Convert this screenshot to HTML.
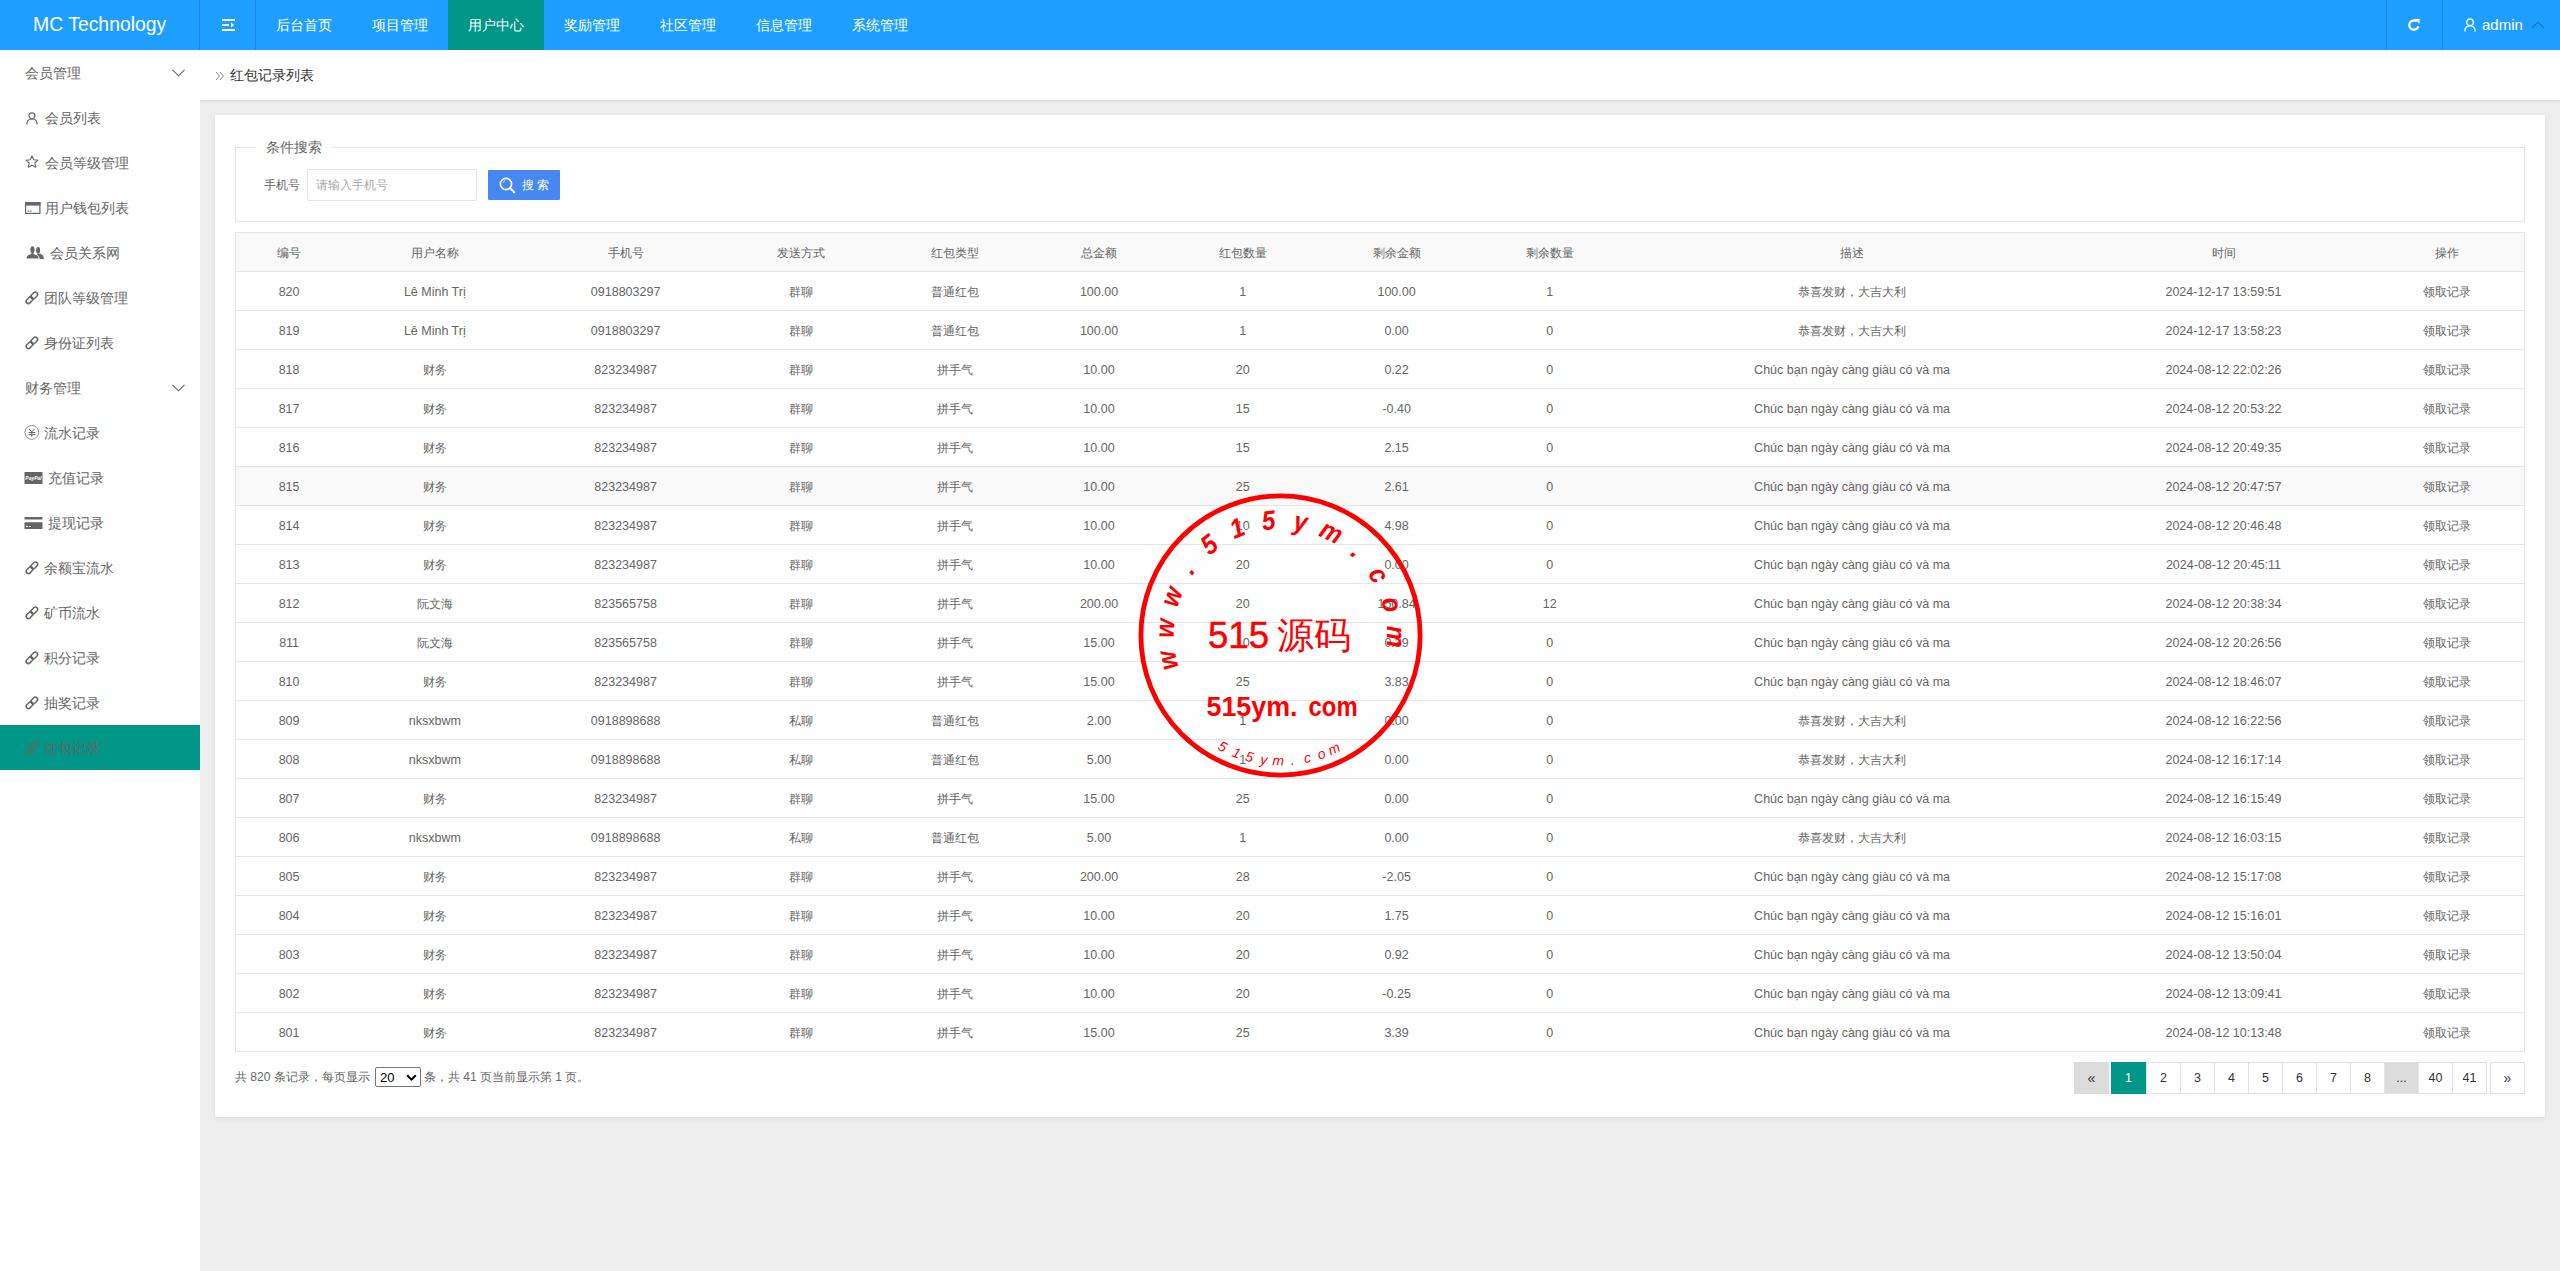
<!DOCTYPE html>
<html><head><meta charset="utf-8"><title>红包记录</title>
<style>
*{margin:0;padding:0;box-sizing:border-box}
html,body{width:2560px;height:1271px;overflow:hidden;background:#eeeeee;font-family:"Liberation Sans",sans-serif;color:#666}
.abs{position:absolute}
#hdr{position:absolute;left:0;top:0;width:2560px;height:50px;background:#1e9fff}
#logo{position:absolute;left:33px;top:0;height:50px;line-height:49px;font-size:19.4px;color:#fff;white-space:nowrap}
.vdiv{position:absolute;top:0;width:1px;height:50px;background:rgba(0,0,0,.13)}
.nav{position:absolute;top:0;height:50px;width:96px;line-height:50px;text-align:center;font-size:14px;color:#fff}
.nav.on{background:#009688}
#side{position:absolute;left:0;top:50px;width:200px;height:1221px;background:#fff}
.si{position:absolute;left:0;width:200px;height:45px;line-height:45px;font-size:14px;color:#666;white-space:nowrap}
.si.on{background:#009688}
.si svg{position:absolute}
.si .t{position:absolute;top:1px}
#crumb{position:absolute;left:200px;top:50px;width:2360px;height:50px;background:#fff;box-shadow:0 1px 3px rgba(0,0,0,.12);clip-path:inset(0 0 -10px 0)}
#card{position:absolute;left:215px;top:115px;width:2330px;height:1002px;background:#fff;box-shadow:0 1px 4px rgba(0,0,0,.1)}
#fs{position:absolute;left:20px;top:32px;width:2290px;height:75px;border:1px solid #e6e6e6}
#legend{position:absolute;left:20px;top:-11px;padding:0 10px;background:#fff;font-size:14px;line-height:20px;color:#666}
#tbl{position:absolute;left:20px;top:117px;width:2290px;height:820px;border:1px solid #e6e6e6;overflow:hidden}
.thead{position:absolute;left:-1px;top:0;width:2290px;height:39px;background:#f9f9f9;border-bottom:1px solid #e6e6e6}
.tr{position:absolute;left:-1px;width:2290px;height:39px;border-bottom:1px solid #e6e6e6;background:#fff}
.tr.hov{background:#f9f9f9}
.c{position:absolute;top:0;width:300px;text-align:center;line-height:40px;font-size:12px;color:#666;white-space:nowrap}
.c.l{font-size:12.5px}
.pg{position:absolute;top:947px;height:32px;width:35px;border:1px solid #e2e2e2;background:#fff;line-height:30px;text-align:center;font-size:12.5px;color:#333}
</style></head><body>
<div id="hdr">
  <div id="logo">MC Technology</div>
  <div class="vdiv" style="left:199px"></div>
  <div class="vdiv" style="left:255px"></div>
  <svg class="abs" style="left:222px;top:19px" width="13" height="12" viewBox="0 0 13 12"><rect x="0" y="0" width="13" height="2" fill="#fff"/><rect x="0" y="5" width="7" height="2" fill="#fff"/><path d="M9 3.5 L12 6 L9 8.5Z" fill="#fff"/><rect x="0" y="10" width="13" height="2" fill="#fff"/></svg>
  <div class="nav" style="left:256px">后台首页</div>
  <div class="nav" style="left:352px">项目管理</div>
  <div class="nav on" style="left:448px">用户中心</div>
  <div class="nav" style="left:544px">奖励管理</div>
  <div class="nav" style="left:640px">社区管理</div>
  <div class="nav" style="left:736px">信息管理</div>
  <div class="nav" style="left:832px">系统管理</div>
  <div class="vdiv" style="left:2386px"></div>
  <div class="vdiv" style="left:2442px"></div>
  <svg class="abs" style="left:2407px;top:18px" width="14" height="14" viewBox="0 0 14 14"><path d="M11.3 8.2 A4.6 4.6 0 1 1 9.6 3.4" fill="none" stroke="#fff" stroke-width="2.2"/><path d="M7.6 0.8 L12.8 0.9 L12.4 6 Z" fill="#fff"/></svg>
  <svg class="abs" style="left:2464px;top:18px" width="12" height="14" viewBox="0 0 12 14"><circle cx="6" cy="4.3" r="3.3" fill="none" stroke="#fff" stroke-width="1.3"/><path d="M0.8 13.5 C0.8 9.6 3 7.8 6 7.8 C9 7.8 11.2 9.6 11.2 13.5" fill="none" stroke="#fff" stroke-width="1.3"/></svg>
  <div class="abs" style="left:2482px;top:0;line-height:49px;font-size:15px;color:#fff">admin</div>
  <svg class="abs" style="left:2531px;top:21px" width="14" height="8" viewBox="0 0 14 8"><path d="M1 7 L7 1 L13 7" fill="none" stroke="rgba(0,0,0,.25)" stroke-width="1.2"/></svg>
</div>

<div id="side">
  <div class="si" style="top:0"><span class="t" style="left:25px">会员管理</span><svg style="left:172px;top:19px" width="13" height="8" viewBox="0 0 13 8"><path d="M0.5 0.8 L6.5 6.8 L12.5 0.8" fill="none" stroke="#666" stroke-width="1.1"/></svg></div>
  <div class="si" style="top:45px"><svg style="left:26px;top:17px" width="12" height="13" viewBox="0 0 12 13"><circle cx="6" cy="3.8" r="3" fill="none" stroke="#666" stroke-width="1.2"/><path d="M0.8 12.5 C0.8 8.8 3 7 6 7 C9 7 11.2 8.8 11.2 12.5" fill="none" stroke="#666" stroke-width="1.2"/></svg><span class="t" style="left:45px">会员列表</span></div>
  <div class="si" style="top:90px"><svg style="left:25px;top:15px" width="14" height="14" viewBox="0 0 14 14"><path d="M7 0.9 L8.8 4.8 L13 5.2 L9.8 8 L10.7 12.3 L7 10.1 L3.3 12.3 L4.2 8 L1 5.2 L5.2 4.8 Z" fill="none" stroke="#666" stroke-width="1.1" stroke-linejoin="round"/></svg><span class="t" style="left:45px">会员等级管理</span></div>
  <div class="si" style="top:135px"><svg style="left:25px;top:17px" width="16" height="13" viewBox="0 0 16 13"><rect x="0.6" y="0.6" width="14.3" height="10.8" fill="none" stroke="#666" stroke-width="1.2"/><rect x="0" y="0" width="15.5" height="3.6" fill="#666"/><rect x="2.4" y="8.6" width="1.6" height="1" fill="#666"/><rect x="4.8" y="8.6" width="1.6" height="1" fill="#666"/></svg><span class="t" style="left:45px">用户钱包列表</span></div>
  <div class="si" style="top:180px"><svg style="left:26px;top:15px" width="18" height="15" viewBox="0 0 18 15"><g fill="#666"><ellipse cx="12.1" cy="5.2" rx="2" ry="3.3"/><path d="M11.2 8.6 L13 8.6 C15.8 9.2 17.9 10.3 17.9 13.9 L11 13.9 Z"/></g><g fill="#666" stroke="#fff" stroke-width="0.9"><path d="M0 13.9 C0 10.8 2 9.6 4.6 9 L5 8.2 C4.2 7.3 3.9 6 3.9 4.4 C3.9 2.2 5 1 6.45 1 C7.9 1 9 2.2 9 4.4 C9 6 8.7 7.3 7.9 8.2 L8.3 9 C10.9 9.6 12.9 10.8 13.3 13.9 Z"/></g></svg><span class="t" style="left:50px">会员关系网</span></div>
  <div class="si" style="top:225px"><svg style="left:20px;top:11px" width="24" height="24" viewBox="0 0 24 24"><g fill="none" stroke="#666" stroke-width="1.5"><rect x="10.38" y="7.22" width="7.70" height="4.50" rx="2.25" transform="rotate(-45 14.23 9.47)"/><rect x="5.72" y="11.88" width="7.70" height="4.50" rx="2.25" transform="rotate(-45 9.57 14.13)"/></g></svg><span class="t" style="left:44px">团队等级管理</span></div>
  <div class="si" style="top:270px"><svg style="left:20px;top:11px" width="24" height="24" viewBox="0 0 24 24"><g fill="none" stroke="#666" stroke-width="1.5"><rect x="10.38" y="7.22" width="7.70" height="4.50" rx="2.25" transform="rotate(-45 14.23 9.47)"/><rect x="5.72" y="11.88" width="7.70" height="4.50" rx="2.25" transform="rotate(-45 9.57 14.13)"/></g></svg><span class="t" style="left:44px">身份证列表</span></div>
  <div class="si" style="top:315px"><span class="t" style="left:25px">财务管理</span><svg style="left:172px;top:19px" width="13" height="8" viewBox="0 0 13 8"><path d="M0.5 0.8 L6.5 6.8 L12.5 0.8" fill="none" stroke="#666" stroke-width="1.1"/></svg></div>
  <div class="si" style="top:360px"><svg style="left:24px;top:15px" width="16" height="16" viewBox="0 0 16 16"><circle cx="7.8" cy="7.4" r="6.9" fill="none" stroke="#777" stroke-width="0.8"/><path d="M4.9 3.8 L7.8 6.9 L10.7 3.8 M7.8 6.9 L7.8 11.6 M4.4 7.5 L11.4 7.5 M4.4 9.6 L11.4 9.6" fill="none" stroke="#666" stroke-width="1"/></svg><span class="t" style="left:44px">流水记录</span></div>
  <div class="si" style="top:405px"><svg style="left:24px;top:17px" width="19" height="13" viewBox="0 0 19 13"><rect x="0.5" y="0" width="18" height="12" fill="#666"/><text x="9.5" y="7.6" font-size="5" font-style="italic" font-weight="bold" fill="#fff" text-anchor="middle" font-family="Liberation Sans">PayPal</text></svg><span class="t" style="left:48px">充值记录</span></div>
  <div class="si" style="top:450px"><svg style="left:24px;top:17px" width="19" height="13" viewBox="0 0 19 13"><rect x="0.5" y="0" width="18" height="2.6" rx="0.5" fill="#666"/><rect x="0.5" y="5.2" width="18" height="6.8" rx="0.5" fill="#666"/><rect x="2" y="9" width="2" height="1" fill="#fff"/><rect x="5" y="9" width="2" height="1" fill="#fff"/></svg><span class="t" style="left:48px">提现记录</span></div>
  <div class="si" style="top:495px"><svg style="left:20px;top:11px" width="24" height="24" viewBox="0 0 24 24"><g fill="none" stroke="#666" stroke-width="1.5"><rect x="10.38" y="7.22" width="7.70" height="4.50" rx="2.25" transform="rotate(-45 14.23 9.47)"/><rect x="5.72" y="11.88" width="7.70" height="4.50" rx="2.25" transform="rotate(-45 9.57 14.13)"/></g></svg><span class="t" style="left:44px">余额宝流水</span></div>
  <div class="si" style="top:540px"><svg style="left:20px;top:11px" width="24" height="24" viewBox="0 0 24 24"><g fill="none" stroke="#666" stroke-width="1.5"><rect x="10.38" y="7.22" width="7.70" height="4.50" rx="2.25" transform="rotate(-45 14.23 9.47)"/><rect x="5.72" y="11.88" width="7.70" height="4.50" rx="2.25" transform="rotate(-45 9.57 14.13)"/></g></svg><span class="t" style="left:44px">矿币流水</span></div>
  <div class="si" style="top:585px"><svg style="left:20px;top:11px" width="24" height="24" viewBox="0 0 24 24"><g fill="none" stroke="#666" stroke-width="1.5"><rect x="10.38" y="7.22" width="7.70" height="4.50" rx="2.25" transform="rotate(-45 14.23 9.47)"/><rect x="5.72" y="11.88" width="7.70" height="4.50" rx="2.25" transform="rotate(-45 9.57 14.13)"/></g></svg><span class="t" style="left:44px">积分记录</span></div>
  <div class="si" style="top:630px"><svg style="left:20px;top:11px" width="24" height="24" viewBox="0 0 24 24"><g fill="none" stroke="#666" stroke-width="1.5"><rect x="10.38" y="7.22" width="7.70" height="4.50" rx="2.25" transform="rotate(-45 14.23 9.47)"/><rect x="5.72" y="11.88" width="7.70" height="4.50" rx="2.25" transform="rotate(-45 9.57 14.13)"/></g></svg><span class="t" style="left:44px">抽奖记录</span></div>
  <div class="si on" style="top:675px"><svg style="left:20px;top:11px" width="24" height="24" viewBox="0 0 24 24"><g fill="none" stroke="#666" stroke-width="1.5"><rect x="10.38" y="7.22" width="7.70" height="4.50" rx="2.25" transform="rotate(-45 14.23 9.47)"/><rect x="5.72" y="11.88" width="7.70" height="4.50" rx="2.25" transform="rotate(-45 9.57 14.13)"/></g></svg><span class="t" style="left:44px">红包记录</span></div>
</div>

<div id="crumb">
  <svg class="abs" style="left:15px;top:21px" width="10" height="10" viewBox="0 0 10 10"><path d="M1 1 L4.5 5 L1 9 M5 1 L8.5 5 L5 9" fill="none" stroke="#888" stroke-width="1"/></svg>
  <div class="abs" style="left:30px;top:0;line-height:50px;font-size:14px;color:#333">红包记录列表</div>
</div>

<div id="card">
  <div id="fs">
    <div id="legend">条件搜索</div>
    <div class="abs" style="left:28px;top:22px;line-height:30px;font-size:12px;color:#666">手机号</div>
    <div class="abs" style="left:71px;top:21px;width:170px;height:32px;border:1px solid #e6e6e6;border-radius:2px;background:#fff"><span class="abs" style="left:8px;top:0;line-height:30px;font-size:12px;color:#aaa">请输入手机号</span></div>
    <div class="abs" style="left:252px;top:22px;width:72px;height:30px;background:#4787f2;border-radius:1px">
      <svg class="abs" style="left:11px;top:7px" width="17" height="17" viewBox="0 0 17 17"><circle cx="7" cy="7" r="5.6" fill="none" stroke="#fff" stroke-width="1.6"/><path d="M11 11 L15.2 15.2" stroke="#fff" stroke-width="2.2" stroke-linecap="round"/><path d="M4.3 5.3 A3 3 0 0 1 6 3.6" fill="none" stroke="#fff" stroke-width="0.9"/></svg>
      <span class="abs" style="left:34px;top:0;line-height:30px;font-size:12px;color:#fff">搜&nbsp;索</span>
    </div>
  </div>
  <div id="tbl"><div class="thead"><span class="c" style="left:-95.9px">编号</span><span class="c" style="left:49.8px">用户名称</span><span class="c" style="left:240.6px">手机号</span><span class="c" style="left:416.2px">发送方式</span><span class="c" style="left:570.0px">红包类型</span><span class="c" style="left:714.0px">总金额</span><span class="c" style="left:857.8px">红包数量</span><span class="c" style="left:1011.6px">剩余金额</span><span class="c" style="left:1164.8px">剩余数量</span><span class="c" style="left:1467.1px">描述</span><span class="c" style="left:1838.5px">时间</span><span class="c" style="left:2062.0px">操作</span></div><div class="tr" style="top:39px"><span class="c l" style="left:-95.9px">820</span><span class="c l" style="left:49.8px">Lê Minh Trị</span><span class="c l" style="left:240.6px">0918803297</span><span class="c" style="left:416.2px">群聊</span><span class="c" style="left:570.0px">普通红包</span><span class="c l" style="left:714.0px">100.00</span><span class="c l" style="left:857.8px">1</span><span class="c l" style="left:1011.6px">100.00</span><span class="c l" style="left:1164.8px">1</span><span class="c" style="left:1467.1px">恭喜发财，大吉大利</span><span class="c l" style="left:1838.5px">2024-12-17 13:59:51</span><span class="c" style="left:2062.0px">领取记录</span></div><div class="tr" style="top:78px"><span class="c l" style="left:-95.9px">819</span><span class="c l" style="left:49.8px">Lê Minh Trị</span><span class="c l" style="left:240.6px">0918803297</span><span class="c" style="left:416.2px">群聊</span><span class="c" style="left:570.0px">普通红包</span><span class="c l" style="left:714.0px">100.00</span><span class="c l" style="left:857.8px">1</span><span class="c l" style="left:1011.6px">0.00</span><span class="c l" style="left:1164.8px">0</span><span class="c" style="left:1467.1px">恭喜发财，大吉大利</span><span class="c l" style="left:1838.5px">2024-12-17 13:58:23</span><span class="c" style="left:2062.0px">领取记录</span></div><div class="tr" style="top:117px"><span class="c l" style="left:-95.9px">818</span><span class="c" style="left:49.8px">财务</span><span class="c l" style="left:240.6px">823234987</span><span class="c" style="left:416.2px">群聊</span><span class="c" style="left:570.0px">拼手气</span><span class="c l" style="left:714.0px">10.00</span><span class="c l" style="left:857.8px">20</span><span class="c l" style="left:1011.6px">0.22</span><span class="c l" style="left:1164.8px">0</span><span class="c l" style="left:1467.1px">Chúc bạn ngày càng giàu có và ma</span><span class="c l" style="left:1838.5px">2024-08-12 22:02:26</span><span class="c" style="left:2062.0px">领取记录</span></div><div class="tr" style="top:156px"><span class="c l" style="left:-95.9px">817</span><span class="c" style="left:49.8px">财务</span><span class="c l" style="left:240.6px">823234987</span><span class="c" style="left:416.2px">群聊</span><span class="c" style="left:570.0px">拼手气</span><span class="c l" style="left:714.0px">10.00</span><span class="c l" style="left:857.8px">15</span><span class="c l" style="left:1011.6px">-0.40</span><span class="c l" style="left:1164.8px">0</span><span class="c l" style="left:1467.1px">Chúc bạn ngày càng giàu có và ma</span><span class="c l" style="left:1838.5px">2024-08-12 20:53:22</span><span class="c" style="left:2062.0px">领取记录</span></div><div class="tr" style="top:195px"><span class="c l" style="left:-95.9px">816</span><span class="c" style="left:49.8px">财务</span><span class="c l" style="left:240.6px">823234987</span><span class="c" style="left:416.2px">群聊</span><span class="c" style="left:570.0px">拼手气</span><span class="c l" style="left:714.0px">10.00</span><span class="c l" style="left:857.8px">15</span><span class="c l" style="left:1011.6px">2.15</span><span class="c l" style="left:1164.8px">0</span><span class="c l" style="left:1467.1px">Chúc bạn ngày càng giàu có và ma</span><span class="c l" style="left:1838.5px">2024-08-12 20:49:35</span><span class="c" style="left:2062.0px">领取记录</span></div><div class="tr hov" style="top:234px"><span class="c l" style="left:-95.9px">815</span><span class="c" style="left:49.8px">财务</span><span class="c l" style="left:240.6px">823234987</span><span class="c" style="left:416.2px">群聊</span><span class="c" style="left:570.0px">拼手气</span><span class="c l" style="left:714.0px">10.00</span><span class="c l" style="left:857.8px">25</span><span class="c l" style="left:1011.6px">2.61</span><span class="c l" style="left:1164.8px">0</span><span class="c l" style="left:1467.1px">Chúc bạn ngày càng giàu có và ma</span><span class="c l" style="left:1838.5px">2024-08-12 20:47:57</span><span class="c" style="left:2062.0px">领取记录</span></div><div class="tr" style="top:273px"><span class="c l" style="left:-95.9px">814</span><span class="c" style="left:49.8px">财务</span><span class="c l" style="left:240.6px">823234987</span><span class="c" style="left:416.2px">群聊</span><span class="c" style="left:570.0px">拼手气</span><span class="c l" style="left:714.0px">10.00</span><span class="c l" style="left:857.8px">10</span><span class="c l" style="left:1011.6px">4.98</span><span class="c l" style="left:1164.8px">0</span><span class="c l" style="left:1467.1px">Chúc bạn ngày càng giàu có và ma</span><span class="c l" style="left:1838.5px">2024-08-12 20:46:48</span><span class="c" style="left:2062.0px">领取记录</span></div><div class="tr" style="top:312px"><span class="c l" style="left:-95.9px">813</span><span class="c" style="left:49.8px">财务</span><span class="c l" style="left:240.6px">823234987</span><span class="c" style="left:416.2px">群聊</span><span class="c" style="left:570.0px">拼手气</span><span class="c l" style="left:714.0px">10.00</span><span class="c l" style="left:857.8px">20</span><span class="c l" style="left:1011.6px">0.00</span><span class="c l" style="left:1164.8px">0</span><span class="c l" style="left:1467.1px">Chúc bạn ngày càng giàu có và ma</span><span class="c l" style="left:1838.5px">2024-08-12 20:45:11</span><span class="c" style="left:2062.0px">领取记录</span></div><div class="tr" style="top:351px"><span class="c l" style="left:-95.9px">812</span><span class="c" style="left:49.8px">阮文海</span><span class="c l" style="left:240.6px">823565758</span><span class="c" style="left:416.2px">群聊</span><span class="c" style="left:570.0px">拼手气</span><span class="c l" style="left:714.0px">200.00</span><span class="c l" style="left:857.8px">20</span><span class="c l" style="left:1011.6px">150.84</span><span class="c l" style="left:1164.8px">12</span><span class="c l" style="left:1467.1px">Chúc bạn ngày càng giàu có và ma</span><span class="c l" style="left:1838.5px">2024-08-12 20:38:34</span><span class="c" style="left:2062.0px">领取记录</span></div><div class="tr" style="top:390px"><span class="c l" style="left:-95.9px">811</span><span class="c" style="left:49.8px">阮文海</span><span class="c l" style="left:240.6px">823565758</span><span class="c" style="left:416.2px">群聊</span><span class="c" style="left:570.0px">拼手气</span><span class="c l" style="left:714.0px">15.00</span><span class="c l" style="left:857.8px">10</span><span class="c l" style="left:1011.6px">0.39</span><span class="c l" style="left:1164.8px">0</span><span class="c l" style="left:1467.1px">Chúc bạn ngày càng giàu có và ma</span><span class="c l" style="left:1838.5px">2024-08-12 20:26:56</span><span class="c" style="left:2062.0px">领取记录</span></div><div class="tr" style="top:429px"><span class="c l" style="left:-95.9px">810</span><span class="c" style="left:49.8px">财务</span><span class="c l" style="left:240.6px">823234987</span><span class="c" style="left:416.2px">群聊</span><span class="c" style="left:570.0px">拼手气</span><span class="c l" style="left:714.0px">15.00</span><span class="c l" style="left:857.8px">25</span><span class="c l" style="left:1011.6px">3.83</span><span class="c l" style="left:1164.8px">0</span><span class="c l" style="left:1467.1px">Chúc bạn ngày càng giàu có và ma</span><span class="c l" style="left:1838.5px">2024-08-12 18:46:07</span><span class="c" style="left:2062.0px">领取记录</span></div><div class="tr" style="top:468px"><span class="c l" style="left:-95.9px">809</span><span class="c l" style="left:49.8px">nksxbwm</span><span class="c l" style="left:240.6px">0918898688</span><span class="c" style="left:416.2px">私聊</span><span class="c" style="left:570.0px">普通红包</span><span class="c l" style="left:714.0px">2.00</span><span class="c l" style="left:857.8px">1</span><span class="c l" style="left:1011.6px">0.00</span><span class="c l" style="left:1164.8px">0</span><span class="c" style="left:1467.1px">恭喜发财，大吉大利</span><span class="c l" style="left:1838.5px">2024-08-12 16:22:56</span><span class="c" style="left:2062.0px">领取记录</span></div><div class="tr" style="top:507px"><span class="c l" style="left:-95.9px">808</span><span class="c l" style="left:49.8px">nksxbwm</span><span class="c l" style="left:240.6px">0918898688</span><span class="c" style="left:416.2px">私聊</span><span class="c" style="left:570.0px">普通红包</span><span class="c l" style="left:714.0px">5.00</span><span class="c l" style="left:857.8px">1</span><span class="c l" style="left:1011.6px">0.00</span><span class="c l" style="left:1164.8px">0</span><span class="c" style="left:1467.1px">恭喜发财，大吉大利</span><span class="c l" style="left:1838.5px">2024-08-12 16:17:14</span><span class="c" style="left:2062.0px">领取记录</span></div><div class="tr" style="top:546px"><span class="c l" style="left:-95.9px">807</span><span class="c" style="left:49.8px">财务</span><span class="c l" style="left:240.6px">823234987</span><span class="c" style="left:416.2px">群聊</span><span class="c" style="left:570.0px">拼手气</span><span class="c l" style="left:714.0px">15.00</span><span class="c l" style="left:857.8px">25</span><span class="c l" style="left:1011.6px">0.00</span><span class="c l" style="left:1164.8px">0</span><span class="c l" style="left:1467.1px">Chúc bạn ngày càng giàu có và ma</span><span class="c l" style="left:1838.5px">2024-08-12 16:15:49</span><span class="c" style="left:2062.0px">领取记录</span></div><div class="tr" style="top:585px"><span class="c l" style="left:-95.9px">806</span><span class="c l" style="left:49.8px">nksxbwm</span><span class="c l" style="left:240.6px">0918898688</span><span class="c" style="left:416.2px">私聊</span><span class="c" style="left:570.0px">普通红包</span><span class="c l" style="left:714.0px">5.00</span><span class="c l" style="left:857.8px">1</span><span class="c l" style="left:1011.6px">0.00</span><span class="c l" style="left:1164.8px">0</span><span class="c" style="left:1467.1px">恭喜发财，大吉大利</span><span class="c l" style="left:1838.5px">2024-08-12 16:03:15</span><span class="c" style="left:2062.0px">领取记录</span></div><div class="tr" style="top:624px"><span class="c l" style="left:-95.9px">805</span><span class="c" style="left:49.8px">财务</span><span class="c l" style="left:240.6px">823234987</span><span class="c" style="left:416.2px">群聊</span><span class="c" style="left:570.0px">拼手气</span><span class="c l" style="left:714.0px">200.00</span><span class="c l" style="left:857.8px">28</span><span class="c l" style="left:1011.6px">-2.05</span><span class="c l" style="left:1164.8px">0</span><span class="c l" style="left:1467.1px">Chúc bạn ngày càng giàu có và ma</span><span class="c l" style="left:1838.5px">2024-08-12 15:17:08</span><span class="c" style="left:2062.0px">领取记录</span></div><div class="tr" style="top:663px"><span class="c l" style="left:-95.9px">804</span><span class="c" style="left:49.8px">财务</span><span class="c l" style="left:240.6px">823234987</span><span class="c" style="left:416.2px">群聊</span><span class="c" style="left:570.0px">拼手气</span><span class="c l" style="left:714.0px">10.00</span><span class="c l" style="left:857.8px">20</span><span class="c l" style="left:1011.6px">1.75</span><span class="c l" style="left:1164.8px">0</span><span class="c l" style="left:1467.1px">Chúc bạn ngày càng giàu có và ma</span><span class="c l" style="left:1838.5px">2024-08-12 15:16:01</span><span class="c" style="left:2062.0px">领取记录</span></div><div class="tr" style="top:702px"><span class="c l" style="left:-95.9px">803</span><span class="c" style="left:49.8px">财务</span><span class="c l" style="left:240.6px">823234987</span><span class="c" style="left:416.2px">群聊</span><span class="c" style="left:570.0px">拼手气</span><span class="c l" style="left:714.0px">10.00</span><span class="c l" style="left:857.8px">20</span><span class="c l" style="left:1011.6px">0.92</span><span class="c l" style="left:1164.8px">0</span><span class="c l" style="left:1467.1px">Chúc bạn ngày càng giàu có và ma</span><span class="c l" style="left:1838.5px">2024-08-12 13:50:04</span><span class="c" style="left:2062.0px">领取记录</span></div><div class="tr" style="top:741px"><span class="c l" style="left:-95.9px">802</span><span class="c" style="left:49.8px">财务</span><span class="c l" style="left:240.6px">823234987</span><span class="c" style="left:416.2px">群聊</span><span class="c" style="left:570.0px">拼手气</span><span class="c l" style="left:714.0px">10.00</span><span class="c l" style="left:857.8px">20</span><span class="c l" style="left:1011.6px">-0.25</span><span class="c l" style="left:1164.8px">0</span><span class="c l" style="left:1467.1px">Chúc bạn ngày càng giàu có và ma</span><span class="c l" style="left:1838.5px">2024-08-12 13:09:41</span><span class="c" style="left:2062.0px">领取记录</span></div><div class="tr" style="top:780px"><span class="c l" style="left:-95.9px">801</span><span class="c" style="left:49.8px">财务</span><span class="c l" style="left:240.6px">823234987</span><span class="c" style="left:416.2px">群聊</span><span class="c" style="left:570.0px">拼手气</span><span class="c l" style="left:714.0px">15.00</span><span class="c l" style="left:857.8px">25</span><span class="c l" style="left:1011.6px">3.39</span><span class="c l" style="left:1164.8px">0</span><span class="c l" style="left:1467.1px">Chúc bạn ngày càng giàu có và ma</span><span class="c l" style="left:1838.5px">2024-08-12 10:13:48</span><span class="c" style="left:2062.0px">领取记录</span></div></div>
  <div class="abs" style="left:20px;top:952px;line-height:20px;font-size:12px;color:#666;white-space:nowrap">共 820 条记录，每页显示</div>
  <div class="abs" style="left:160px;top:952px;width:46px;height:20px;border:1px solid #767676;border-radius:2px;background:#fff"><span class="abs" style="left:4px;top:1px;line-height:18px;font-size:13px;color:#000">20</span><svg class="abs" style="left:30px;top:6px" width="11" height="8" viewBox="0 0 11 8"><path d="M1.2 1.2 L5.5 5.6 L9.8 1.2" fill="none" stroke="#000" stroke-width="2"/></svg></div>
  <div class="abs" style="left:209px;top:952px;line-height:20px;font-size:12px;color:#666;white-space:nowrap">条，共 41 页当前显示第 1 页。</div>
  <div class="pg" style="left:1859px;background:#dcdcdc;border-color:#dcdcdc;font-size:14px">«</div>
  <div class="pg" style="left:1896px;background:#009688;border-color:#009688;color:#fff">1</div>
  <div class="pg" style="left:1931px">2</div>
  <div class="pg" style="left:1965px">3</div>
  <div class="pg" style="left:1999px">4</div>
  <div class="pg" style="left:2033px">5</div>
  <div class="pg" style="left:2067px">6</div>
  <div class="pg" style="left:2101px">7</div>
  <div class="pg" style="left:2135px">8</div>
  <div class="pg" style="left:2169px;background:#dcdcdc;border-color:#e2e2e2">...</div>
  <div class="pg" style="left:2203px">40</div>
  <div class="pg" style="left:2237px">41</div>
  <div class="pg" style="left:2275px;font-size:14px">»</div>
</div>

<svg class="abs" style="left:1130px;top:485px;position:absolute" width="301" height="301" viewBox="0 0 301 301"><circle cx="150.5" cy="150.5" r="139.6" fill="none" stroke="#ff0000" stroke-width="4.8"/><text x="0" y="0" transform="translate(46.52,173.55) rotate(257.50) scale(0.9,1)" text-anchor="middle" font-family="Liberation Sans" font-weight="bold" font-style="italic" font-size="27" fill="#ff0000">w</text><text x="0" y="0" transform="translate(44.21,143.84) rotate(273.58) scale(0.9,1)" text-anchor="middle" font-family="Liberation Sans" font-weight="bold" font-style="italic" font-size="27" fill="#ff0000">w</text><text x="0" y="0" transform="translate(50.21,114.66) rotate(289.67) scale(0.9,1)" text-anchor="middle" font-family="Liberation Sans" font-weight="bold" font-style="italic" font-size="27" fill="#ff0000">w</text><text x="0" y="0" transform="translate(64.07,88.28) rotate(305.75) scale(0.9,1)" text-anchor="middle" font-family="Liberation Sans" font-weight="bold" font-style="italic" font-size="27" fill="#ff0000">.</text><text x="0" y="0" transform="translate(84.69,66.77) rotate(321.83) scale(0.9,1)" text-anchor="middle" font-family="Liberation Sans" font-weight="bold" font-style="italic" font-size="27" fill="#ff0000">5</text><text x="0" y="0" transform="translate(110.46,51.81) rotate(337.92) scale(0.9,1)" text-anchor="middle" font-family="Liberation Sans" font-weight="bold" font-style="italic" font-size="27" fill="#ff0000">1</text><text x="0" y="0" transform="translate(139.37,44.58) rotate(354.00) scale(0.9,1)" text-anchor="middle" font-family="Liberation Sans" font-weight="bold" font-style="italic" font-size="27" fill="#ff0000">5</text><text x="0" y="0" transform="translate(169.15,45.64) rotate(370.08) scale(0.9,1)" text-anchor="middle" font-family="Liberation Sans" font-weight="bold" font-style="italic" font-size="27" fill="#ff0000">y</text><text x="0" y="0" transform="translate(197.46,54.91) rotate(386.17) scale(0.9,1)" text-anchor="middle" font-family="Liberation Sans" font-weight="bold" font-style="italic" font-size="27" fill="#ff0000">m</text><text x="0" y="0" transform="translate(222.11,71.67) rotate(402.25) scale(0.9,1)" text-anchor="middle" font-family="Liberation Sans" font-weight="bold" font-style="italic" font-size="27" fill="#ff0000">.</text><text x="0" y="0" transform="translate(241.14,94.59) rotate(418.33) scale(0.9,1)" text-anchor="middle" font-family="Liberation Sans" font-weight="bold" font-style="italic" font-size="27" fill="#ff0000">c</text><text x="0" y="0" transform="translate(253.09,121.89) rotate(434.42) scale(0.9,1)" text-anchor="middle" font-family="Liberation Sans" font-weight="bold" font-style="italic" font-size="27" fill="#ff0000">o</text><text x="0" y="0" transform="translate(257.00,151.43) rotate(450.50) scale(0.9,1)" text-anchor="middle" font-family="Liberation Sans" font-weight="bold" font-style="italic" font-size="27" fill="#ff0000">m</text><text x="0" y="0" transform="translate(90.47,265.81) rotate(27.50)" text-anchor="middle" font-family="Liberation Sans" font-style="italic" font-size="14" fill="#ff0000">5</text><text x="0" y="0" transform="translate(104.97,272.27) rotate(20.50)" text-anchor="middle" font-family="Liberation Sans" font-style="italic" font-size="14" fill="#ff0000">1</text><text x="0" y="0" transform="translate(118.17,276.42) rotate(14.40)" text-anchor="middle" font-family="Liberation Sans" font-style="italic" font-size="14" fill="#ff0000">5</text><text x="0" y="0" transform="translate(133.31,279.36) rotate(7.60)" text-anchor="middle" font-family="Liberation Sans" font-style="italic" font-size="14" fill="#ff0000">y</text><text x="0" y="0" transform="translate(148.00,280.48) rotate(1.10)" text-anchor="middle" font-family="Liberation Sans" font-style="italic" font-size="14" fill="#ff0000">m</text><text x="0" y="0" transform="translate(162.96,279.90) rotate(-5.50)" text-anchor="middle" font-family="Liberation Sans" font-style="italic" font-size="14" fill="#ff0000">.</text><text x="0" y="0" transform="translate(178.42,277.47) rotate(-12.40)" text-anchor="middle" font-family="Liberation Sans" font-style="italic" font-size="14" fill="#ff0000">c</text><text x="0" y="0" transform="translate(192.82,273.42) rotate(-19.00)" text-anchor="middle" font-family="Liberation Sans" font-style="italic" font-size="14" fill="#ff0000">o</text><text x="0" y="0" transform="translate(206.06,268.03) rotate(-25.30)" text-anchor="middle" font-family="Liberation Sans" font-style="italic" font-size="14" fill="#ff0000">m</text><text x="78.0" y="163.0" font-family="Liberation Sans" font-size="37" fill="#ff0000" stroke="#ff0000" stroke-width="0.5" textLength="61" lengthAdjust="spacingAndGlyphs">515</text><text x="147.0" y="162.8" font-family="Liberation Sans" font-size="37" fill="#ff0000" textLength="74" lengthAdjust="spacingAndGlyphs">源码</text><text x="76.5" y="230.5" font-family="Liberation Sans" font-weight="bold" font-size="28" fill="#ff0000" textLength="91" lengthAdjust="spacingAndGlyphs">515ym.</text><text x="178.6" y="230.5" font-family="Liberation Sans" font-weight="bold" font-size="28" fill="#ff0000" textLength="49" lengthAdjust="spacingAndGlyphs">com</text></svg>
</body></html>
